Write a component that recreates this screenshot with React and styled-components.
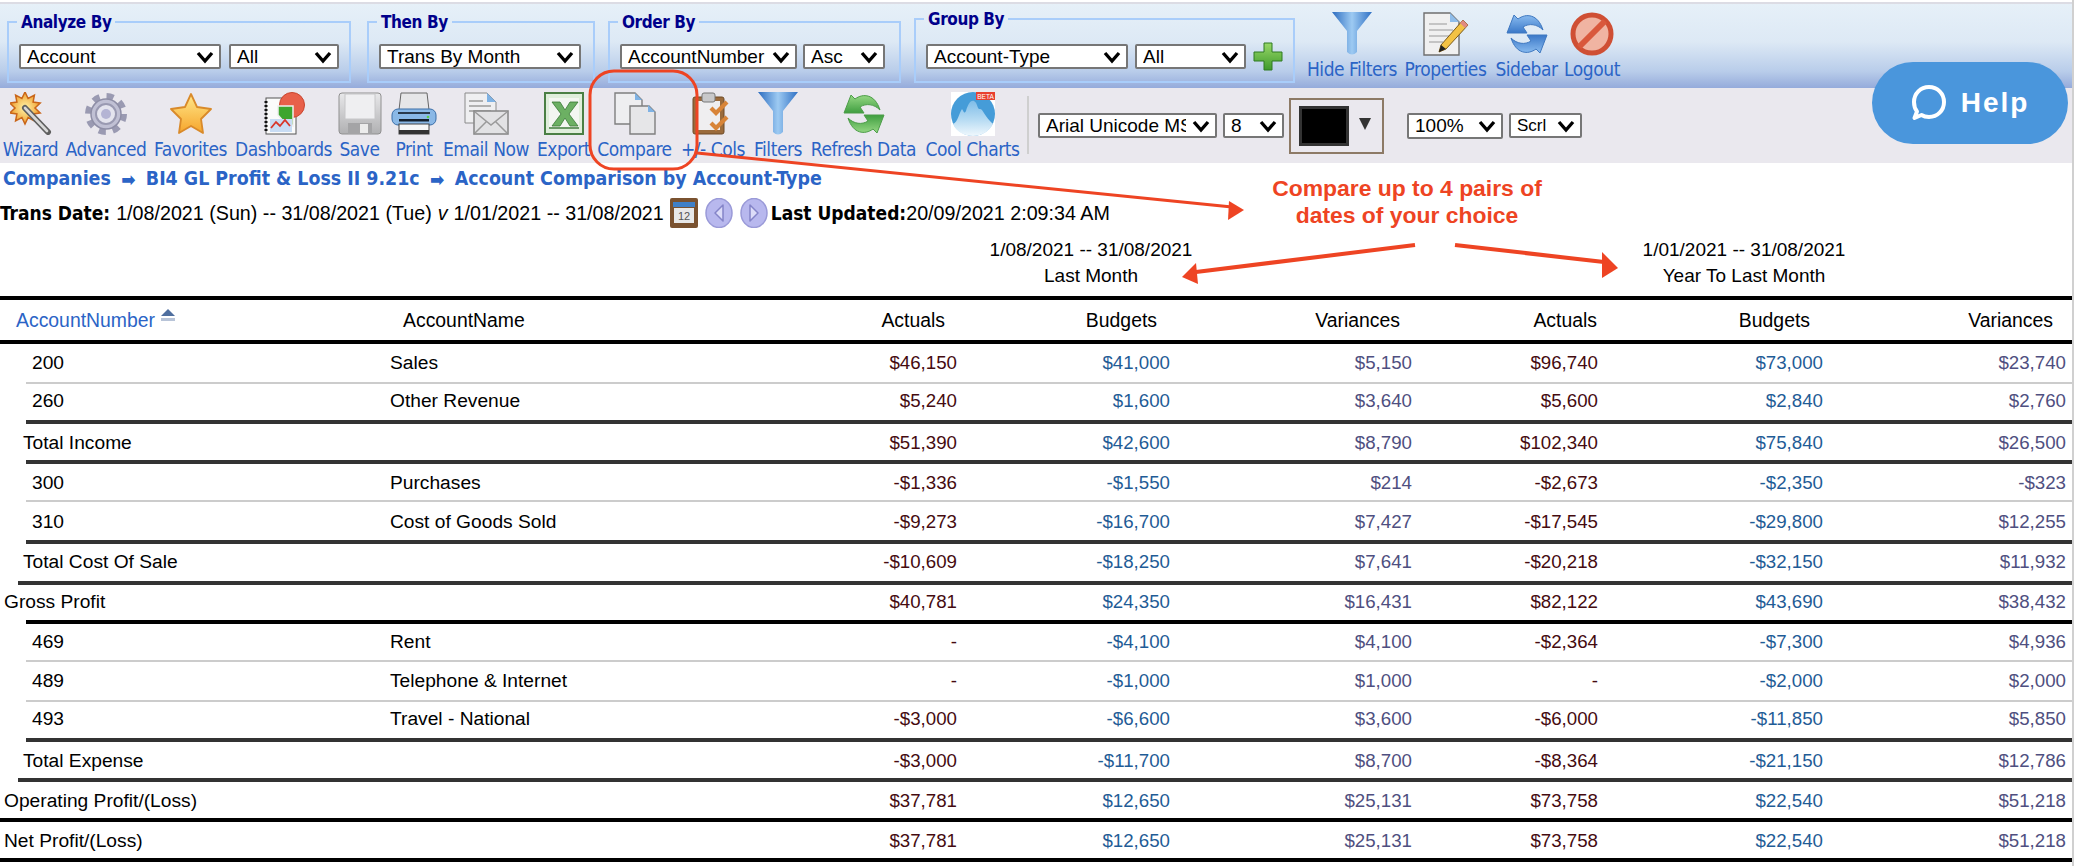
import React from "react";
import styled, { createGlobalStyle } from "styled-components";

const GlobalStyle = createGlobalStyle`
  html, body {
    margin: 0;
    padding: 0;
    background: #fff;
    font-family: "Liberation Sans", Arial, sans-serif;
    overflow: hidden;
  }
`;

const LINK = "#2b64c6";
const RED = "#ee4423";
const UI_FONT = `"DejaVu Sans", Verdana, sans-serif`;

const Page = styled.div`
  position: relative;
  width: 2072px;
  height: 866px;
  border-right: 2px solid #d0d0d0;
  overflow: hidden;
`;

const TopEdge = styled.div`
  height: 2px;
  margin-top: 2px;
  background: #dcdce4;
`;

const FilterBand = styled.div`
  display: flex;
  align-items: flex-end;
  height: 84px;
  padding: 0 0 5px 7px;
  box-sizing: border-box;
  background: linear-gradient(#e6f0f8 0%, #dde9f5 45%, #b9cdea 80%, #95abdb 100%);
`;

const FilterSet = styled.fieldset`
  box-sizing: border-box;
  width: ${(p) => p.$width}px;
  height: ${(p) => p.$height || 71}px;
  margin: 0 ${(p) => p.$after}px 0 0;
  padding: ${(p) => p.$pad || 12}px 0 0 10px;
  border: 2px solid #a9cdfa;
  min-inline-size: 0;
`;

const FilterTitle = styled.legend`
  padding: 0 4px;
  margin-left: -2px;
  font: bold 17px/20px ${UI_FONT};
  font-stretch: condensed;
  letter-spacing: -0.4px;
  color: #00008b;
`;

const Controls = styled.div`
  display: flex;
  align-items: center;
  gap: ${(p) => p.$gap || 8}px;
`;

const Dropdown = styled.select`
  appearance: none;
  box-sizing: border-box;
  width: ${(p) => p.$width}px;
  height: ${(p) => p.$height || 25}px;
  padding: 0 ${(p) => p.$right || 26}px 0 6px;
  border: 2px solid #767676;
  border-radius: 2px;
  background: #fff url("data:image/svg+xml,%3Csvg xmlns='http://www.w3.org/2000/svg' width='18' height='14'%3E%3Cpath d='M2 3l7 8 7-8' fill='none' stroke='black' stroke-width='3.4'/%3E%3C/svg%3E") no-repeat right 5px center;
  font: ${(p) => p.$size || 19}px "Liberation Sans", Arial, sans-serif;
  color: #000;
`;

const BandActions = styled.div`
  display: flex;
  align-self: flex-start;
  margin-left: 9px;
  padding-top: 8px;
`;

const ToolItem = styled.div`
  display: flex;
  flex-direction: column;
  align-items: center;
  flex: none;
  width: ${(p) => p.$w}px;
  white-space: nowrap;
`;

const IconSlot = styled.div`
  display: flex;
  align-items: center;
  justify-content: center;
  height: ${(p) => p.$h || 43}px;
  margin-bottom: ${(p) => p.$mb ?? 4}px;
`;

const ToolLabel = styled.span`
  font: 19px/20px ${UI_FONT};
  font-stretch: condensed;
  letter-spacing: -0.45px;
  color: ${LINK};
`;

const Toolbar = styled.div`
  display: flex;
  height: 75px;
  background: #eae8ee;
`;

const ToolIcons = styled.div`
  display: flex;
  padding-top: 4px;
`;

const ToolDivider = styled.div`
  flex: none;
  width: 2px;
  height: 58px;
  margin: 8px 9px 0 11px;
  background: #cfcfcf;
`;

const FontControls = styled.div`
  display: flex;
  align-items: center;
  gap: 6px;
`;

const ColorBox = styled.div`
  display: flex;
  align-items: center;
  box-sizing: border-box;
  width: 95px;
  height: 56px;
  margin: 0 17px 0 -1px;
  padding-left: 8px;
  border: 2px solid #8d7a66;
  gap: 10px;
`;

const ColorSwatch = styled.div`
  width: 50px;
  height: 40px;
  box-sizing: border-box;
  background: #000;
  border: 3px solid #333;
`;

const ColorCaret = styled.div`
  width: 0;
  height: 0;
  border-left: 6px solid transparent;
  border-right: 6px solid transparent;
  border-top: 12px solid #333;
  margin-top: -4px;
`;

const HelpButton = styled.button`
  position: absolute;
  left: 1872px;
  top: 62px;
  display: flex;
  align-items: center;
  justify-content: center;
  gap: 14px;
  width: 196px;
  height: 82px;
  border: 0;
  border-radius: 41px;
  background: #4a96dc;
  color: #fff;
  font: bold 28px "Liberation Sans", Arial, sans-serif;
  letter-spacing: 2px;
`;

const Breadcrumb = styled.div`
  display: flex;
  align-items: center;
  height: 32px;
  padding-left: 3px;
  font: bold 19.4px/32px ${UI_FONT};
  font-stretch: condensed;
  color: ${LINK};
  white-space: nowrap;
`;

const CrumbArrow = styled.span`
  display: inline-flex;
  justify-content: center;
  width: 35px;
  font-size: 19px;
`;

const MetaLine = styled.div`
  display: flex;
  align-items: center;
  height: 32px;
  margin-top: 2px;
  font-size: 19.7px;
  white-space: nowrap;
`;

const MetaLabel = styled.b`
  font: bold 19px ${UI_FONT};
  font-stretch: condensed;
  margin-right: ${(p) => p.$mr || 0}px;
`;

const MetaItalic = styled.i`
  margin: 0 6px;
`;

const MetaIcons = styled.span`
  display: inline-flex;
  align-items: center;
  gap: 7px;
  margin: 0 3px 0 6px;
`;

const CaptionRow = styled.div`
  display: flex;
  gap: 253px;
  height: 67px;
  box-sizing: border-box;
  padding: 8px 0 0 891px;
`;

const Caption = styled.div`
  width: 400px;
  font-size: 19px;
  line-height: 26px;
  text-align: center;
`;

const Rule = styled.div`
  height: ${(p) => (p.$tone === "light" ? 2 : 4)}px;
  margin-left: ${(p) => p.$inset || 0}px;
  background: ${(p) =>
    p.$tone === "light" ? "#cccccc" : p.$tone === "dark" ? "#333333" : "#000000"};
`;

const HeadRow = styled.div`
  display: grid;
  grid-template-columns: 403px 400px 142px 212px 243px 197px 213px 243px;
  align-items: center;
  height: 40px;
  font-size: 19.4px;
`;

const SortHead = styled.div`
  display: flex;
  align-items: flex-start;
  gap: 6px;
  padding-left: 16px;
  color: ${LINK};
`;

const HeadCell = styled.div`
  text-align: ${(p) => (p.$left ? "left" : "right")};
`;

const DataRow = styled.div`
  display: grid;
  grid-template-columns: 390px 400px 167px 213px 242px 186px 225px 243px;
  align-items: center;
  box-sizing: border-box;
  height: ${(p) => p.$h}px;
  padding: ${(p) => Math.max(p.$shift || 0, 0) * 2}px 0 ${(p) => Math.max(-(p.$shift || 0), 0) * 2}px;
  font-size: 18.7px;
`;

const RowLabel = styled.div`
  padding-left: ${(p) => p.$indent}px;
  font-size: 19.2px;
  white-space: nowrap;
`;

const Amount = styled.div`
  text-align: right;
  color: ${(p) => p.$color};
`;

const Overlay = styled.svg`
  position: absolute;
  left: 0;
  top: 0;
  pointer-events: none;
`;

const Callout = styled.div`
  position: absolute;
  left: 1222px;
  top: 175px;
  width: 370px;
  font-size: 22.9px;
  font-weight: bold;
  line-height: 27px;
  text-align: center;
  color: ${RED};
`;

/* ---------- icons ---------- */

const burst = (cx, cy, r1, r2, n) =>
  Array.from({ length: n * 2 }, (_, i) => {
    const a = (Math.PI * i) / n;
    const r = i % 2 ? r2 : r1;
    return `${(cx + r * Math.sin(a)).toFixed(1)},${(cy - r * Math.cos(a)).toFixed(1)}`;
  }).join(" ");

const WizardIcon = () => (
  <svg width="42" height="43" viewBox="0 0 42 43">
    <defs>
      <radialGradient id="wizFill">
        <stop offset="0" stopColor="#fff4a8" />
        <stop offset="1" stopColor="#f0a030" />
      </radialGradient>
    </defs>
    <polygon points={burst(15, 16, 16, 10, 10)} fill="url(#wizFill)" stroke="#c9661a" strokeWidth="1.5" />
    <path d="M15 16L38 40" stroke="#5f5f5f" strokeWidth="6" strokeLinecap="round" />
    <path d="M15 16L37 39" stroke="#d8d8d8" strokeWidth="2.6" strokeLinecap="round" />
  </svg>
);

const GearIcon = () => (
  <svg width="42" height="43" viewBox="0 0 42 43">
    <circle cx="21" cy="22" r="18" fill="none" stroke="#9a9ab2" strokeWidth="6" strokeDasharray="7.1 7.04" />
    <circle cx="21" cy="22" r="15" fill="#c0c0d4" stroke="#8e8ea6" strokeWidth="1.5" />
    <circle cx="21" cy="22" r="10" fill="#e4e4ee" stroke="#9a9ab2" strokeWidth="2" />
    <circle cx="21" cy="22" r="5" fill="#b4b4d4" />
  </svg>
);

const StarIcon = () => (
  <svg width="42" height="43" viewBox="0 0 42 43">
    <defs>
      <linearGradient id="starFill" x1="0" y1="0" x2="0" y2="1">
        <stop offset="0" stopColor="#ffe88a" />
        <stop offset="1" stopColor="#f6a52c" />
      </linearGradient>
    </defs>
    <polygon
      points="21,2 27,15 41,17 31,27 33,41 21,34 9,41 11,27 1,17 15,15"
      fill="url(#starFill)"
      stroke="#d98a2a"
      strokeWidth="1.8"
      strokeLinejoin="round"
    />
  </svg>
);

const DashboardIcon = () => (
  <svg width="42" height="43" viewBox="0 0 42 43">
    <rect x="3" y="6" width="30" height="36" fill="#fbfbfb" stroke="#555" />
    <path d="M3 9v31" stroke="#111" strokeWidth="3" strokeDasharray="2 2" />
    <circle cx="29" cy="13" r="12.5" fill="#e8604a" stroke="#c8452e" />
    <path d="M15 14h15v20l-9-4-6-7z" fill="#3da52e" stroke="#eee" strokeWidth="1.5" />
    <rect x="7" y="27" width="22" height="13" fill="#c8dcf4" />
    <path d="M8 36l5-6 4 4 5-6 5 6" fill="none" stroke="#d8362a" strokeWidth="1.8" />
  </svg>
);

const SaveIcon = () => (
  <svg width="44" height="43" viewBox="0 0 44 43">
    <defs>
      <linearGradient id="saveFill" x1="0" y1="0" x2="0" y2="1">
        <stop offset="0" stopColor="#e8e8ea" />
        <stop offset="1" stopColor="#b0b0b2" />
      </linearGradient>
    </defs>
    <rect x="1" y="1" width="42" height="41" rx="3" fill="url(#saveFill)" stroke="#909090" />
    <rect x="7" y="2" width="30" height="25" fill="#efeff1" stroke="#c6c6c8" />
    <rect x="10" y="31" width="24" height="11" fill="#a4a4a6" />
    <rect x="22" y="32" width="8" height="9" fill="#ececec" />
  </svg>
);

const PrintIcon = () => (
  <svg width="46" height="43" viewBox="0 0 46 43">
    <path d="M10 1h26l2 17H8z" fill="#e6e6e8" stroke="#666" />
    <rect x="1" y="17" width="44" height="16" rx="6" fill="#8ab8e6" stroke="#3a6ea8" />
    <rect x="7" y="20" width="32" height="2" fill="#2a3a4c" />
    <rect x="8" y="27" width="30" height="2.5" fill="#15202c" />
    <circle cx="37" cy="25" r="1.3" fill="#5ad04a" />
    <rect x="8" y="32" width="30" height="10" fill="#f8f8f8" stroke="#444" />
    <rect x="8" y="38" width="30" height="4" fill="#333" />
  </svg>
);

const EmailIcon = () => (
  <svg width="45" height="43" viewBox="0 0 45 43">
    <path d="M1 1h22l9 9v21H1z" fill="#efeff1" stroke="#8a8a8a" />
    <path d="M23 1l9 9h-9z" fill="#7fb2e4" />
    <path d="M5 9h14M5 14h22M5 19h22" stroke="#b0b0b0" strokeWidth="2" />
    <rect x="10" y="19" width="34" height="23" fill="#e2e2e4" stroke="#8a8a8a" strokeWidth="1.6" />
    <path d="M11 20l16 13 16-13M11 41l12-12M43 41L31 29" fill="none" stroke="#9a9a9a" strokeWidth="1.5" />
  </svg>
);

const ExcelIcon = () => (
  <svg width="40" height="43" viewBox="0 0 40 43">
    <rect x="1" y="1" width="38" height="41" fill="#dfeedb" stroke="#4a7f44" strokeWidth="2" />
    <rect x="5" y="6" width="30" height="31" fill="#f3f6f1" />
    <path d="M8 10h8l5 8 5-8h8l-9 12 9 12h-8l-5-8-5 8H8l9-12z" fill="#6cb063" stroke="#3a7a36" strokeWidth=".8" />
    <path d="M5 36h30" stroke="#3c7a37" strokeWidth="1.5" />
  </svg>
);

const CompareIcon = () => (
  <svg width="42" height="43" viewBox="0 0 42 43">
    <path d="M1 1h20l7 7v24H1z" fill="#eeeef0" stroke="#7f7f7f" strokeWidth="1.4" />
    <path d="M21 1l7 7h-7z" fill="#7fb2e4" />
    <path d="M16 14h19l6 6v22H16z" fill="#e6e6e8" stroke="#7f7f7f" strokeWidth="1.4" />
    <path d="M34 13l7 7h-7z" fill="#7fb2e4" />
  </svg>
);

const ColsIcon = () => (
  <svg width="42" height="43" viewBox="0 0 42 43">
    <rect x="1" y="5" width="31" height="37" rx="2" fill="#9b6b3c" stroke="#6e4a26" />
    <rect x="5" y="9" width="23" height="29" fill="#efeef0" />
    <rect x="10" y="1" width="13" height="9" rx="2" fill="#c8c8ca" stroke="#777" />
    <path d="M19 16l5 5 11-11M19 31l5 5 11-11" fill="none" stroke="#d88438" strokeWidth="4.2" />
  </svg>
);

const FunnelIcon = ({ id }) => (
  <svg width="40" height="44" viewBox="0 0 40 44">
    <defs>
      <linearGradient id={id}>
        <stop offset="0" stopColor="#2c6cc0" />
        <stop offset=".5" stopColor="#9dcaf2" />
        <stop offset="1" stopColor="#2f70c4" />
      </linearGradient>
    </defs>
    <path d="M0 0h40L25 19v21q-5 5-10 0V19z" fill={`url(#${id})`} />
  </svg>
);

const CycleIcon = ({ id, light, dark, edge }) => (
  <svg width="42" height="44" viewBox="0 0 42 44">
    <defs>
      <linearGradient id={id} x1="0" y1="0" x2="0" y2="1">
        <stop offset="0" stopColor={light} />
        <stop offset="1" stopColor={dark} />
      </linearGradient>
    </defs>
    <path
      d="M1 21L8 3l4 4C20 1 32 2 37 18c-6-6-14-7-20-3l4 6z"
      fill={`url(#${id})`}
      stroke={edge}
    />
    <path
      d="M1 21L8 3l4 4C20 1 32 2 37 18c-6-6-14-7-20-3l4 6z"
      fill={`url(#${id})`}
      stroke={edge}
      transform="rotate(180 21 22)"
    />
  </svg>
);

const ChartsIcon = () => (
  <svg width="44" height="44" viewBox="0 0 44 44">
    <defs>
      <linearGradient id="peakFill" x1="0" y1="0" x2="0" y2="1">
        <stop offset="0" stopColor="#7fbde8" />
        <stop offset=".55" stopColor="#b8dcf3" />
        <stop offset="1" stopColor="#f0f8fd" />
      </linearGradient>
    </defs>
    <rect width="44" height="44" fill="#fff" />
    <circle cx="22" cy="22" r="22" fill="#459cd8" />
    <path d="M2 32c5-2 6-11 9-15 2 3 2 5 4 2 2-6 4-11 8-10 4 2 3 9 6 8 3 0 5 8 13 15-4 8-12 12-20 12S5 40 2 32z" fill="url(#peakFill)" />
    <rect x="25" y="0" width="19" height="8" fill="#e8402f" />
    <text x="34.5" y="6.5" fontSize="6.5" fill="#fff" textAnchor="middle" fontFamily="Liberation Sans">BETA</text>
  </svg>
);

const PropertiesIcon = () => (
  <svg width="46" height="44" viewBox="0 0 46 44">
    <path d="M1 1h26l9 9v33H1z" fill="#f0f0f0" stroke="#6f6f6f" strokeWidth="1.4" />
    <path d="M27 1l9 9h-9z" fill="#8fbdea" />
    <path d="M6 12h18M6 18h24M6 24h20M6 30h14" stroke="#c4c4c4" strokeWidth="2" />
    <path d="M40 8l5 5-22 24-7 3 2-7z" fill="#f3c244" stroke="#7a5a1a" />
    <path d="M40 8l5 5-3 3-5-5z" fill="#e08a80" />
    <path d="M16 40l2-7 5 4z" fill="#222" />
  </svg>
);

const LogoutIcon = () => (
  <svg width="44" height="44" viewBox="0 0 44 44">
    <circle cx="22" cy="22" r="19" fill="#f0b4a2" stroke="#cf4f34" strokeWidth="5" />
    <path d="M9 35L35 9" stroke="#d9583c" strokeWidth="6" />
  </svg>
);

const PlusIcon = () => (
  <svg width="30" height="29" viewBox="0 0 30 29">
    <defs>
      <linearGradient id="plusFill" x1="0" y1="0" x2="0" y2="1">
        <stop offset="0" stopColor="#98d868" />
        <stop offset="1" stopColor="#3f9a2c" />
      </linearGradient>
    </defs>
    <path d="M11 1h8v9h10v9H19v9h-8v-9H1v-9h10z" fill="url(#plusFill)" stroke="#2f7a22" strokeLinejoin="round" />
  </svg>
);

const CalendarIcon = () => (
  <svg width="28" height="30" viewBox="0 0 28 30">
    <rect width="28" height="30" rx="2" fill="#7a5230" />
    <rect x="3" y="4" width="22" height="5" fill="#3f80c8" />
    <rect x="4" y="10" width="20" height="15" fill="#e8e8e8" />
    <text x="14" y="22" fontSize="11" fontFamily="Liberation Sans" textAnchor="middle" fill="#555">12</text>
  </svg>
);

const RoundArrow = ({ flip }) => (
  <svg width="28" height="30" viewBox="0 0 28 30">
    <ellipse cx="14" cy="15" rx="13" ry="14.5" fill="#b8b8ee" stroke="#9a9ad8" strokeWidth="1.5" />
    <path
      d={flip ? "M10 7l8 8-8 8z" : "M18 7l-8 8 8 8z"}
      fill="#dcdcf8"
      stroke="#8484c8"
      strokeWidth="1.5"
      strokeLinejoin="round"
    />
  </svg>
);

const SortArrow = () => (
  <svg width="14" height="12" viewBox="0 0 14 12">
    <path d="M7 0l7 7H0z" fill="#4f6f9f" />
    <rect y="9" width="14" height="3" fill="#b8c4d8" />
  </svg>
);

const ChatBubble = () => (
  <svg width="36" height="38" viewBox="0 0 36 38" fill="none">
    <path
      d="M18 3c8.5 0 15 6.5 15 15s-6.5 15-15 15c-3 0-5.5-.7-7.5-2l-7 3 2.5-6.5C4 25 3 22 3 18 3 9.5 9.5 3 18 3z"
      stroke="#fff"
      strokeWidth="4"
      strokeLinejoin="round"
    />
  </svg>
);

/* ---------- data ---------- */

const TOOLS = [
  { label: "Wizard", w: 61, icon: <WizardIcon /> },
  { label: "Advanced", w: 90, icon: <GearIcon /> },
  { label: "Favorites", w: 79, icon: <StarIcon /> },
  { label: "Dashboards", w: 107, icon: <DashboardIcon /> },
  { label: "Save", w: 45, icon: <SaveIcon /> },
  { label: "Print", w: 64, icon: <PrintIcon /> },
  { label: "Email Now", w: 80, icon: <EmailIcon /> },
  { label: "Export", w: 75, icon: <ExcelIcon /> },
  { label: "Compare", w: 67, icon: <CompareIcon /> },
  { label: "+/- Cols", w: 90, icon: <ColsIcon /> },
  { label: "Filters", w: 40, icon: <FunnelIcon id="funnelTool" /> },
  {
    label: "Refresh Data",
    w: 131,
    icon: <CycleIcon id="cycleGreen" light="#96d884" dark="#3f9e40" edge="#4c9c48" />,
  },
  { label: "Cool Charts", w: 87, icon: <ChartsIcon /> },
];

const BAND_ACTIONS = [
  { label: "Hide Filters", w: 96, icon: <FunnelIcon id="funnelBand" /> },
  { label: "Properties", w: 91, icon: <PropertiesIcon /> },
  {
    label: "Sidebar",
    w: 71,
    icon: <CycleIcon id="cycleBlue" light="#8abcf0" dark="#3a78c8" edge="#3f78c0" />,
  },
  { label: "Logout", w: 60, icon: <LogoutIcon /> },
];

const ROWS = [
  { h: 38, no: "200", name: "Sales", v: ["$46,150", "$41,000", "$5,150", "$96,740", "$73,000", "$23,740"], rule: ["light", 26] },
  { h: 36, shift: -1, no: "260", name: "Other Revenue", v: ["$5,240", "$1,600", "$3,640", "$5,600", "$2,840", "$2,760"], rule: ["dark", 26] },
  { h: 36, shift: 1, label: "Total Income", indent: 23, v: ["$51,390", "$42,600", "$8,790", "$102,340", "$75,840", "$26,500"], rule: ["dark", 26] },
  { h: 36, shift: 1, no: "300", name: "Purchases", v: ["-$1,336", "-$1,550", "$214", "-$2,673", "-$2,350", "-$323"], rule: ["light", 26] },
  { h: 38, shift: 1, no: "310", name: "Cost of Goods Sold", v: ["-$9,273", "-$16,700", "$7,427", "-$17,545", "-$29,800", "$12,255"], rule: ["dark", 26] },
  { h: 37, shift: -1, label: "Total Cost Of Sale", indent: 23, v: ["-$10,609", "-$18,250", "$7,641", "-$20,218", "-$32,150", "$11,932"], rule: ["dark", 18] },
  { h: 35, shift: -1, label: "Gross Profit", indent: 4, v: ["$40,781", "$24,350", "$16,431", "$82,122", "$43,690", "$38,432"], rule: ["black", 26] },
  { h: 36, no: "469", name: "Rent", v: ["-", "-$4,100", "$4,100", "-$2,364", "-$7,300", "$4,936"], rule: ["light", 26] },
  { h: 38, no: "489", name: "Telephone & Internet", v: ["-", "-$1,000", "$1,000", "-", "-$2,000", "$2,000"], rule: ["light", 26] },
  { h: 36, shift: -1, no: "493", name: "Travel - National", v: ["-$3,000", "-$6,600", "$3,600", "-$6,000", "-$11,850", "$5,850"], rule: ["dark", 26] },
  { h: 36, shift: 1, label: "Total Expense", indent: 23, v: ["-$3,000", "-$11,700", "$8,700", "-$8,364", "-$21,150", "$12,786"], rule: ["dark", 18] },
  { h: 36, shift: 1, label: "Operating Profit/(Loss)", indent: 4, v: ["$37,781", "$12,650", "$25,131", "$73,758", "$22,540", "$51,218"], rule: ["black", 0] },
  { h: 36, shift: 1, label: "Net Profit/(Loss)", indent: 4, v: ["$37,781", "$12,650", "$25,131", "$73,758", "$22,540", "$51,218"], rule: ["black", 0] },
];

const AMOUNT_COLORS = ["#450b10", "#1f5c96", "#4f4f80"];

const Tool = ({ item, slotH, gap }) => (
  <ToolItem $w={item.w}>
    <IconSlot $h={slotH} $mb={gap}>{item.icon}</IconSlot>
    <ToolLabel>{item.label}</ToolLabel>
  </ToolItem>
);

const Select = ({ value, ...rest }) => (
  <Dropdown defaultValue={value} {...rest}>
    <option>{value}</option>
  </Dropdown>
);

export default function App() {
  return (
    <Page>
      <GlobalStyle />
      <TopEdge />
      <FilterBand>
        <FilterSet $width={344} $after={16}>
          <FilterTitle>Analyze By</FilterTitle>
          <Controls>
            <Select value="Account" $width={202} />
            <Select value="All" $width={110} />
          </Controls>
        </FilterSet>
        <FilterSet $width={228} $after={13}>
          <FilterTitle>Then By</FilterTitle>
          <Controls>
            <Select value="Trans By Month" $width={202} />
          </Controls>
        </FilterSet>
        <FilterSet $width={293} $after={13}>
          <FilterTitle>Order By</FilterTitle>
          <Controls $gap={6}>
            <Select value="AccountNumber" $width={177} $right={22} />
            <Select value="Asc" $width={82} />
          </Controls>
        </FilterSet>
        <FilterSet $width={381} $after={0} $height={74} $pad={13}>
          <FilterTitle>Group By</FilterTitle>
          <Controls $gap={7}>
            <Select value="Account-Type" $width={202} />
            <Select value="All" $width={111} />
            <PlusIcon />
          </Controls>
        </FilterSet>
        <BandActions>
          {BAND_ACTIONS.map((item) => (
            <Tool key={item.label} item={item} slotH={44} gap={3} />
          ))}
        </BandActions>
      </FilterBand>

      <Toolbar>
        <ToolIcons>
          {TOOLS.map((item) => (
            <Tool key={item.label} item={item} />
          ))}
        </ToolIcons>
        <ToolDivider />
        <FontControls>
          <Select value="Arial Unicode MS" $width={179} $right={29} />
          <Select value="8" $width={61} />
          <ColorBox>
            <ColorSwatch />
            <ColorCaret />
          </ColorBox>
          <Select value="100%" $width={96} $height={26} $right={24} />
          <Select value="Scrl" $width={73} $size={17} $right={24} />
        </FontControls>
      </Toolbar>

      <Breadcrumb>
        Companies<CrumbArrow>➡</CrumbArrow>BI4 GL Profit &amp; Loss II 9.21c<CrumbArrow>➡</CrumbArrow>Account Comparison by Account-Type
      </Breadcrumb>
      <MetaLine>
        <MetaLabel $mr={6}>Trans Date:</MetaLabel>
        1/08/2021 (Sun) -- 31/08/2021 (Tue)
        <MetaItalic>v</MetaItalic>
        1/01/2021 -- 31/08/2021
        <MetaIcons>
          <CalendarIcon />
          <RoundArrow />
          <RoundArrow flip />
        </MetaIcons>
        <MetaLabel>Last Updated:</MetaLabel>
        20/09/2021 2:09:34 AM
      </MetaLine>
      <CaptionRow>
        <Caption>
          1/08/2021 -- 31/08/2021
          <br />
          Last Month
        </Caption>
        <Caption>
          1/01/2021 -- 31/08/2021
          <br />
          Year To Last Month
        </Caption>
      </CaptionRow>

      <Rule />
      <HeadRow>
        <SortHead>
          AccountNumber
          <SortArrow />
        </SortHead>
        <HeadCell $left>AccountName</HeadCell>
        <HeadCell>Actuals</HeadCell>
        <HeadCell>Budgets</HeadCell>
        <HeadCell>Variances</HeadCell>
        <HeadCell>Actuals</HeadCell>
        <HeadCell>Budgets</HeadCell>
        <HeadCell>Variances</HeadCell>
      </HeadRow>
      <Rule />
      {ROWS.map((row, i) => (
        <React.Fragment key={i}>
          <DataRow $h={row.h} $shift={row.shift}>
            {row.label ? (
              <RowLabel $indent={row.indent}>{row.label}</RowLabel>
            ) : (
              <RowLabel $indent={32}>{row.no}</RowLabel>
            )}
            <RowLabel $indent={0}>{row.name}</RowLabel>
            {row.v.map((val, j) => (
              <Amount key={j} $color={AMOUNT_COLORS[j % 3]}>
                {val}
              </Amount>
            ))}
          </DataRow>
          <Rule $tone={row.rule[0]} $inset={row.rule[1]} />
        </React.Fragment>
      ))}

      <HelpButton>
        <ChatBubble />
        Help
      </HelpButton>

      <Overlay width="2078" height="866" viewBox="0 0 2078 866">
        <g fill="none" stroke={RED} strokeWidth="3">
          <rect x="590" y="71" width="107" height="98" rx="24" />
          <path d="M697 153L1232 207" />
          <path d="M1415 245L1196 272" strokeWidth="4" />
          <path d="M1455 245L1604 262" strokeWidth="4" />
        </g>
        <g fill={RED}>
          <path d="M1244 210L1229 201L1228 220z" />
          <path d="M1182 277L1196 263L1198 284z" />
          <path d="M1618 268L1602 252L1602 278z" />
        </g>
      </Overlay>
      <Callout>
        Compare up to 4 pairs of
        <br />
        dates of your choice
      </Callout>
    </Page>
  );
}
